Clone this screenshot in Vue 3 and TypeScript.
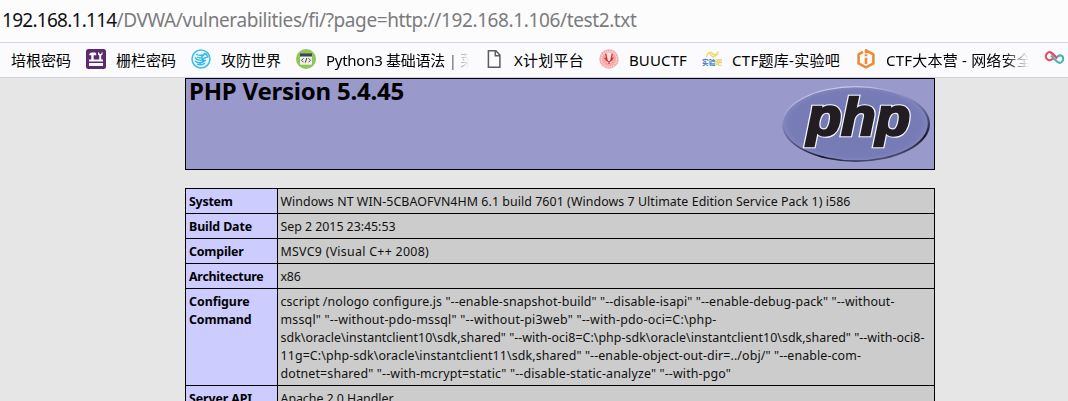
<script setup lang="ts">
import type { Directive } from 'vue'

interface Line { text: string; width: number }
interface Row { label: Line[]; value: Line[] }
interface Bookmark { icon: string; text: string; box: number; width: number; faded?: boolean }

// Spreads the letters so that a line takes exactly the given width.
const vFit: Directive<HTMLElement, number> = {
  mounted(el, binding) {
    const natural = el.getBoundingClientRect().width
    const count = Array.from(el.textContent ?? '').length
    if (count > 0) el.style.letterSpacing = `${(binding.value - natural) / count}px`
  },
}

const bookmarks: Bookmark[] = [
  { icon: 'tools', text: '栅栏密码', box: 60, width: 60 },
  { icon: 'world', text: '攻防世界', box: 60, width: 60 },
  { icon: 'code', text: 'Python3 基础语法 | 菜', box: 143, width: 149, faded: true },
  { icon: 'file', text: 'X计划平台', box: 70, width: 70 },
  { icon: 'buu', text: 'BUUCTF', box: 58, width: 58 },
  { icon: 'lab', text: 'CTF题库-实验吧', box: 109, width: 108 },
  { icon: 'camp', text: 'CTF大本营 - 网络安全', box: 143, width: 146, faded: true },
]

const rows: Row[] = [
  {
    label: [{ text: 'System', width: 43.5 }],
    value: [{ text: 'Windows NT WIN-5CBAOFVN4HM 6.1 build 7601 (Windows 7 Ultimate Edition Service Pack 1) i586', width: 570 }],
  },
  { label: [{ text: 'Build Date', width: 63 }], value: [{ text: 'Sep 2 2015 23:45:53', width: 115 }] },
  { label: [{ text: 'Compiler', width: 54.5 }], value: [{ text: 'MSVC9 (Visual C++ 2008)', width: 148.5 }] },
  { label: [{ text: 'Architecture', width: 74.5 }], value: [{ text: 'x86', width: 20 }] },
  {
    label: [{ text: 'Configure', width: 60.5 }, { text: 'Command', width: 62.5 }],
    value: [
      { text: 'cscript /nologo configure.js "--enable-snapshot-build" "--disable-isapi" "--enable-debug-pack" "--without-', width: 614 },
      { text: 'mssql" "--without-pdo-mssql" "--without-pi3web" "--with-pdo-oci=C:\\php-', width: 436 },
      { text: 'sdk\\oracle\\instantclient10\\sdk,shared" "--with-oci8=C:\\php-sdk\\oracle\\instantclient10\\sdk,shared" "--with-oci8-', width: 644 },
      { text: '11g=C:\\php-sdk\\oracle\\instantclient11\\sdk,shared" "--enable-object-out-dir=../obj/" "--enable-com-', width: 580.5 },
      { text: 'dotnet=shared" "--with-mcrypt=static" "--disable-static-analyze" "--with-pgo"', width: 450.5 },
    ],
  },
  { label: [{ text: 'Server API', width: 63 }], value: [{ text: 'Apache 2.0 Handler', width: 113 }] },
]
</script>

<template>
  <div class="window">
    <div class="address">
      <span v-fit="114.5" class="host">192.168.1.114</span><span v-fit="520" class="path">/DVWA/vulnerabilities/fi/?page=http://192.168.1.106/test2.txt</span>
    </div>

    <nav class="bookmarks">
      <span class="name first">培根密码</span>
      <div v-for="b in bookmarks" :key="b.text" class="bookmark">
        <svg class="icon" viewBox="0 0 20 20">
          <g v-if="b.icon === 'tools'">
            <rect width="20" height="20" rx="2.5" fill="#5a2b70" />
            <path d="M3.2 5.5Q3.5 3.5 6 3.5h3q1.3 0 1.3 2v.7H7.6V11H5.3V6.2H3.2zM12 3v2.4l1.2 1.2V11h2V6.6L16.5 5.4V3l-1.2 1v1h-1.8V4z" fill="#fff" />
            <path d="M3 10.5h14v2H3zM3 14h14v3H3z" fill="#fff" />
          </g>
          <g v-else-if="b.icon === 'world'" fill="none">
            <circle cx="10" cy="10" r="9" fill="#e5f8ff" stroke="#43bce4" stroke-width="1.5" />
            <path d="M5 5.3q4 2.2 10-.5l2 3q-5 3-11 .2M4 8.5q3 4 8 2.4M4 12q5 4 11-1M6 15q4 2 8-1M14 4l-4 5 3 2-5 5" stroke="#35b7e5" stroke-width="1.3" />
          </g>
          <g v-else-if="b.icon === 'code'">
            <circle cx="10" cy="10" r="10" fill="#90c653" />
            <rect x="4" y="4.3" width="12" height="11.4" rx="1" fill="#f0f0e9" />
            <path d="M4 4.3h12v3.2H4z" fill="#39464f" />
            <path d="M7.5 9.3l-2 2 2 2M12.5 9.3l2 2-2 2M10.8 9l-1.5 4.6" fill="none" stroke="#39464f" stroke-width="1" />
          </g>
          <path v-else-if="b.icon === 'file'" d="M4.4 1.7h7.5l4 4.4v12.2H4.4zM11.3 1.8v5h4.5" fill="#fbfbfc" stroke="#5d5d5d" stroke-width="1.5" />
          <g v-else-if="b.icon === 'buu'" fill="none">
            <circle cx="10" cy="10" r="9.7" fill="#f3aaa8" />
            <circle cx="10" cy="10" r="7.8" stroke="#fbdcda" stroke-width="1.6" stroke-dasharray="1.2 1.1" />
            <path d="M5.5 4.5l1.6 7.5q2.9 5.4 5.8 0l1.6-7.5q-4.5-2-9 0" fill="#fae5e3" />
            <path d="M6.6 4.5l1.5 6.8q1.9 3.4 3.8 0l1.4-6.8M5.6 8.5L8 12M14.2 8.5L12 12M10 12.5v2.6" stroke="#d52b30" stroke-width="1.3" />
          </g>
          <g v-else-if="b.icon === 'lab'">
            <path d="M4.5 8Q6 2 9.5 3.5q4 5.5 7-1M7 4l4 4 5-3" fill="none" stroke="#f0d75c" stroke-width="1.3" />
            <text class="lab-text" x="0" y="15.5"><tspan fill="#397eba">实验</tspan><tspan fill="#edce52">吧</tspan></text>
          </g>
          <g v-else-if="b.icon === 'camp'" fill="none" stroke="#ef8a36" stroke-width="2.6">
            <path d="M7 2.8L2.6 5.4v9L10 18.3l7.4-3.9v-9L10 1.3v3" stroke-linejoin="round" />
            <path d="M10 8.7v6.2M10 5.2v2" />
          </g>
        </svg>
        <span class="name-box" :class="[b.icon, { faded: b.faded }]"><span v-fit="b.width" class="name">{{ b.text }}</span></span>
      </div>
      <svg class="icon" viewBox="0 0 20 20" fill="none" stroke-width="2" stroke-linecap="round">
        <path d="M9 9.8Q5.5 12.5 3 10T3 4.5t5.5 0l4.2 4.3" stroke="#e64e62" />
        <path d="M7.6 7.2l5.6 5.6q3 2.2 5-.3t.2-5.2q-2.4-2-4.8.2" stroke="#43b4ae" />
        <path d="M6.6 3.6l5.6 5" stroke="#e64e62" />
      </svg>
    </nav>

    <main class="page">
      <header class="banner">
        <h1><span v-fit="215">PHP Version 5.4.45</span></h1>
        <svg class="logo" viewBox="0 0 150 80">
          <defs>
            <linearGradient id="rim" x1="0.3" y1="0" x2="0.7" y2="1">
              <stop offset="0" stop-color="#d4d5ef" />
              <stop offset="0.3" stop-color="#8f91c6" />
              <stop offset="0.6" stop-color="#4b4c79" />
              <stop offset="0.8" stop-color="#181829" />
              <stop offset="1" stop-color="#55567f" />
            </linearGradient>
            <radialGradient id="disc">
              <stop offset="0" stop-color="#7279b4" />
              <stop offset="0.9" stop-color="#777cb6" />
              <stop offset="1" stop-color="#8184bd" />
            </radialGradient>
          </defs>
          <ellipse cx="74" cy="40" rx="74" ry="38" fill="url(#rim)" />
          <ellipse cx="73.6" cy="39.8" rx="72.2" ry="36.5" fill="url(#disc)" />
          <text class="php php-edge" x="25" y="51" textLength="103" lengthAdjust="spacingAndGlyphs">php</text>
          <text class="php php-face" x="25" y="51" textLength="103" lengthAdjust="spacingAndGlyphs">php</text>
        </svg>
      </header>

      <section class="info">
        <div v-for="(row, i) in rows" :key="i" class="row">
          <div class="label"><div v-for="l in row.label" :key="l.text"><span v-fit="l.width">{{ l.text }}</span></div></div>
          <div class="value"><div v-for="l in row.value" :key="l.text"><span v-fit="l.width">{{ l.text }}</span></div></div>
        </div>
      </section>
    </main>
  </div>
</template>

<style>
html, body { overflow: hidden; }
</style>

<style scoped>
.window {
  width: 1068px;
  height: 401px;
  overflow: hidden;
  display: flex;
  flex-direction: column;
  background: #e6e6e6;
  color: #000;
  font-family: "Noto Sans", "Noto Sans CJK SC", sans-serif;
}
.address {
  box-sizing: border-box;
  height: 43px;
  flex: none;
  padding: 0 0 1px 2px;
  line-height: 40px;
  font-size: 19px;
  white-space: nowrap;
  background: #fcfcfd;
  border-bottom: 1px solid #d5d6dc;
}
.host { color: #111; }
.path { color: #7b7b7e; }
.bookmarks {
  box-sizing: border-box;
  height: 35px;
  flex: none;
  display: flex;
  gap: 15px;
  padding: 6px 0 0 11px;
  overflow: hidden;
  background: #fbfbfd;
  border-bottom: 1px solid #d0d0da;
}
.bookmark { display: flex; gap: 10px; flex: none; }
.icon { width: 20px; height: 20px; flex: none; display: block; }
.name { font-size: 15px; line-height: 22px; white-space: nowrap; }
.first { width: 60px; flex: none; }
.name-box { width: 60px; overflow: hidden; white-space: nowrap; line-height: 22px; }
.name-box.code, .name-box.camp { width: 143px; }
.name-box.file { width: 70px; }
.name-box.buu { width: 58px; }
.name-box.lab { width: 109px; }
.faded { mask-image: linear-gradient(to right, #000 118px, transparent 143px); }
.lab-text { font-family: "Noto Sans CJK SC", sans-serif; font-size: 6.7px; font-weight: 700; }
.page { width: 750px; margin-left: 185px; }
.banner {
  box-sizing: border-box;
  height: 92px;
  display: flex;
  justify-content: space-between;
  border: 1px solid #000;
  background: #9999cc;
}
h1 {
  margin: -5px 0 0 3px;
  font-size: 24px;
  line-height: 34px;
  font-weight: 700;
  white-space: nowrap;
}
.logo { width: 150px; height: 80px; margin: 5px 2px 0 0; }
.php {
  font-family: "Liberation Sans", sans-serif;
  font-size: 51px;
  font-weight: 700;
  font-style: italic;
  stroke-linejoin: miter;
}
.php-edge { fill: #fff; stroke: #f5f5fa; stroke-width: 4.6px; }
.php-face { fill: #211d22; stroke: #211d22; stroke-width: 2.4px; }
.info {
  margin-top: 18px;
  border: 1px solid #000;
  font-size: 12.4px;
  line-height: 18px;
}
.row { display: flex; border-bottom: 1px solid #000; }
.label, .value { padding: 4px 3px 2px; white-space: nowrap; }
.label { width: 85px; flex: none; background: #ccccff; border-right: 1px solid #000; font-weight: 700; }
.value { flex: 1; min-width: 0; padding-left: 2.5px; background: #cccccc; color: #111; }
</style>
